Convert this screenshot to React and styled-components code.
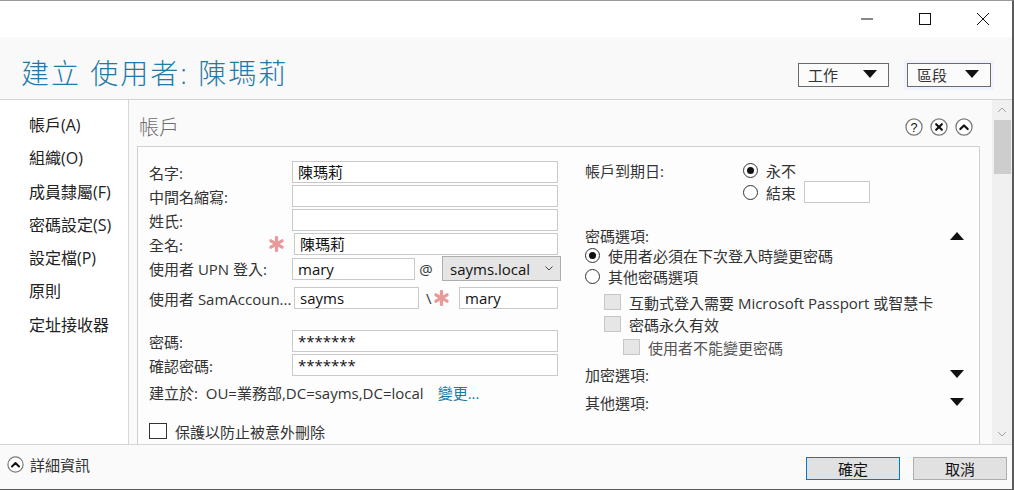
import styled, { createGlobalStyle } from 'styled-components';

const GlobalStyle = createGlobalStyle`
  html, body {
    margin: 0;
    padding: 0;
    background: #ffffff;
  }
  * {
    box-sizing: border-box;
  }
`;

const FONT = `"Open Sans", "Noto Sans CJK TC", sans-serif`;

const Window = styled.div`
  width: 1014px;
  height: 490px;
  display: flex;
  flex-direction: column;
  background: #fff;
  border-top: 1px solid #9a9a9a;
  border-right: 2px solid #5a5a5a;
  border-bottom: 1px solid #5a5a5a;
  font-family: ${FONT};
  color: #222;
  overflow: hidden;
`;

const TitleBar = styled.div`
  height: 36px;
  display: flex;
  justify-content: flex-end;
  background: #fff;
`;

const WinButton = styled.div`
  width: 58px;
  height: 36px;
  display: flex;
  align-items: center;
  justify-content: center;
`;

const Header = styled.div`
  height: 63px;
  display: flex;
  align-items: center;
  justify-content: space-between;
  background: #f9f9f9;
  border-bottom: 1px solid #d2d2d2;
  padding: 0 18px 0 21px;
`;

const Title = styled.h1`
  margin: 8px 0 0;
  font-size: 28px;
  font-weight: 300;
  color: #1f7aa8;
  letter-spacing: 2px;
  white-space: nowrap;
`;

const HeaderTools = styled.div`
  display: flex;
  align-items: center;
  gap: 12px;
  margin-top: 13px;
`;

const ToolWrap = styled.div`
  padding: 3px 3px;
  background: ${(p) => (p.$active ? '#eef3fd' : 'transparent')};
`;

const ToolSelect = styled.div`
  width: ${(p) => p.$w}px;
  height: 24px;
  border: 1px solid #6a6a6a;
  background: #fbfbfb;
  display: flex;
  align-items: center;
  justify-content: space-between;
  padding: 0 11px 0 9px;
  font-size: 15px;
  color: #333;
`;

const Main = styled.div`
  height: 345px;
  display: flex;
  border-bottom: 1px solid #d6d6d6;
`;

const Nav = styled.ul`
  width: 129px;
  margin: 0;
  padding: 9px 0 0 29px;
  list-style: none;
  border-right: 1px solid #d6d6d6;
  background: #fff;
`;

const NavItem = styled.li`
  height: 33.3px;
  line-height: 33px;
  font-size: 16px;
  color: #222;
  white-space: nowrap;
`;

const Content = styled.div`
  flex: 1;
  display: flex;
  flex-direction: column;
  background: #fafafa;
  padding-left: 8px;
  overflow: hidden;
`;

const SectionHead = styled.div`
  height: 46px;
  display: flex;
  align-items: center;
  justify-content: space-between;
  padding: 0 19px 0 2px;
`;

const SectionTitle = styled.div`
  font-size: 20px;
  color: #6e6e6e;
  font-weight: 300;
  margin-top: 6px;
`;

const HeadIcons = styled.div`
  display: flex;
  gap: 7px;
  margin-top: 8px;
`;

const Panel = styled.div`
  flex: 1;
  margin-right: 12px;
  border: 1px solid #d0d0d0;
  border-bottom: none;
  background: #fdfdfd;
  display: flex;
  padding: 14px 0 0 11px;
  gap: 24px;
`;

const LeftCol = styled.div`
  width: 412px;
  display: flex;
  flex-direction: column;
`;

const Row = styled.div`
  display: flex;
  align-items: center;
  height: ${(p) => p.$h || 22}px;
  margin-top: ${(p) => p.$mt || 0}px;
  font-size: 15px;
`;

const Label = styled.div`
  width: 143px;
  flex-shrink: 0;
  display: flex;
  align-items: center;
  justify-content: space-between;
  color: #333;
  white-space: nowrap;
  overflow: hidden;
`;

const Input = styled.div`
  width: ${(p) => p.$w}px;
  flex-shrink: 0;
  height: 22px;
  margin-left: ${(p) => p.$ml || 0}px;
  border: 1px solid #c9c9c9;
  background: #fff;
  font-size: 15px;
  line-height: 20px;
  padding-left: 5px;
  color: #111;
  white-space: nowrap;
`;

const Combo = styled.div`
  width: 119px;
  flex-shrink: 0;
  height: 25px;
  margin-left: 5px;
  border: 1px solid #adadad;
  background: #e5e5e5;
  display: flex;
  align-items: center;
  justify-content: space-between;
  padding: 0 7px 0 7px;
  font-size: 15px;
  color: #111;
`;

const Sep = styled.span`
  width: ${(p) => p.$w}px;
  flex-shrink: 0;
  text-align: ${(p) => p.$align || 'center'};
  padding-left: ${(p) => p.$pl || 0}px;
  font-size: 15px;
  color: #333;
`;

const Star = styled.span`
  display: flex;
  flex-shrink: 0;
  margin-right: ${(p) => p.$mr || 0}px;
`;

const CreatedIn = styled.span`
  color: #333;
  white-space: nowrap;
`;

const Link = styled.span`
  color: #1a7aa6;
  margin-left: 14px;
`;

const CheckBox = styled.span`
  width: ${(p) => (p.$disabled ? 17 : 18)}px;
  height: 16px;
  flex-shrink: 0;
  border: 1px solid ${(p) => (p.$disabled ? '#c6c6c6' : '#333')};
  background: ${(p) => (p.$disabled ? '#e6e6e6' : '#fff')};
  margin-right: 8px;
`;

const CheckLabel = styled.span`
  color: #333;
`;

const RightCol = styled.div`
  width: 380px;
  display: flex;
  flex-direction: column;
  font-size: 15px;
  color: #333;
`;

const ExpiryBlock = styled.div`
  display: flex;
  margin-top: -2px;
`;

const ExpiryLabel = styled.div`
  width: 158px;
  height: 22px;
  display: flex;
  align-items: center;
`;

const RadioGroup = styled.div`
  display: flex;
  flex-direction: column;
`;

const OptRow = styled.div`
  display: flex;
  align-items: center;
  height: ${(p) => p.$h || 21}px;
  margin-top: ${(p) => p.$mt || 0}px;
  padding-left: ${(p) => p.$indent || 0}px;
  color: ${(p) => (p.$muted ? '#555' : '#333')};
  white-space: nowrap;
`;

const Radio = styled.span`
  width: 15px;
  height: 15px;
  border-radius: 50%;
  border: 1px solid #333;
  background: #fff;
  display: inline-flex;
  align-items: center;
  justify-content: center;
  margin-right: 8px;
  flex-shrink: 0;
  &::after {
    content: '';
    width: 7px;
    height: 7px;
    border-radius: 50%;
    background: ${(p) => (p.$checked ? '#111' : 'transparent')};
  }
`;

const SmallInput = styled.div`
  width: 66px;
  height: 22px;
  border: 1px solid #c9c9c9;
  background: #fff;
  margin-left: 8px;
`;

const GroupHead = styled.div`
  display: flex;
  align-items: center;
  justify-content: space-between;
  height: ${(p) => p.$h || 28}px;
  margin-top: ${(p) => p.$mt || 0}px;
  padding-right: 1px;
`;

const Scrollbar = styled.div`
  width: 20px;
  background: #f0f0f0;
  display: flex;
  flex-direction: column;
  align-items: center;
`;

const ScrollArrow = styled.div`
  height: 20px;
  display: flex;
  align-items: center;
  justify-content: center;
`;

const Thumb = styled.div`
  width: 17px;
  height: 54px;
  background: #cdcdcd;
`;

const Spacer = styled.div`
  flex: 1;
`;

const Footer = styled.div`
  flex: 1;
  display: flex;
  align-items: flex-start;
  justify-content: space-between;
  background: #fafafa;
  padding: 9px 5px 0 7px;
`;

const Details = styled.div`
  display: flex;
  align-items: center;
  gap: 6px;
  font-size: 15px;
  color: #333;
`;

const Buttons = styled.div`
  display: flex;
  gap: 13px;
  margin-top: 3px;
`;

const Button = styled.div`
  width: 94px;
  height: 23px;
  border: 1px solid ${(p) => (p.$primary ? '#0078d7' : '#adadad')};
  background: #e1e1e1;
  display: flex;
  align-items: center;
  justify-content: center;
  font-size: 15px;
  color: #111;
`;

function Triangle({ up }) {
  return (
    <svg width="14" height="9" viewBox="0 0 14 9">
      {up ? <polygon points="0,9 14,9 7,1" fill="#111" /> : <polygon points="0,0 14,0 7,8" fill="#111" />}
    </svg>
  );
}

function Asterisk() {
  return (
    <svg width="17" height="16" viewBox="0 0 17 16">
      <g stroke="#e89a9a" strokeWidth="3.2" strokeLinecap="round">
        <line x1="8.5" y1="1.5" x2="8.5" y2="14.5" />
        <line x1="2.9" y1="4.8" x2="14.1" y2="11.2" />
        <line x1="2.9" y1="11.2" x2="14.1" y2="4.8" />
      </g>
    </svg>
  );
}

function CircleIcon({ kind, size = 17 }) {
  return (
    <svg width={size} height={size} viewBox="0 0 17 17">
      <circle cx="8.5" cy="8.5" r="7.6" fill="#fff" stroke="#7a7a7a" strokeWidth="1.2" />
      {kind === 'help' && (
        <text x="8.5" y="13" textAnchor="middle" fontSize="12" fontFamily="Liberation Sans, sans-serif" fill="#111">?</text>
      )}
      {kind === 'close' && (
        <g stroke="#111" strokeWidth="2" strokeLinecap="round">
          <line x1="5.8" y1="5.8" x2="11.2" y2="11.2" />
          <line x1="11.2" y1="5.8" x2="5.8" y2="11.2" />
        </g>
      )}
      {kind === 'up' && (
        <polyline points="5,10.5 8.5,7 12,10.5" fill="none" stroke="#111" strokeWidth="2" strokeLinecap="round" strokeLinejoin="round" />
      )}
    </svg>
  );
}

function Chevron({ down }) {
  return (
    <svg width="10" height="6" viewBox="0 0 10 6">
      <polyline points={down ? '1,1 5,5 9,1' : '1,5 5,1 9,5'} fill="none" stroke="#a3a3a3" strokeWidth="1" />
    </svg>
  );
}

export default function App() {
  return (
    <>
      <GlobalStyle />
      <Window>
        <TitleBar>
          <WinButton>
            <svg width="12" height="2" viewBox="0 0 12 2"><line x1="0" y1="1" x2="12" y2="1" stroke="#111" strokeWidth="1" /></svg>
          </WinButton>
          <WinButton>
            <svg width="12" height="12" viewBox="0 0 12 12"><rect x="0.5" y="0.5" width="11" height="11" fill="none" stroke="#111" strokeWidth="1" /></svg>
          </WinButton>
          <WinButton>
            <svg width="12" height="12" viewBox="0 0 12 12">
              <line x1="0" y1="0" x2="12" y2="12" stroke="#111" strokeWidth="1" />
              <line x1="12" y1="0" x2="0" y2="12" stroke="#111" strokeWidth="1" />
            </svg>
          </WinButton>
        </TitleBar>

        <Header>
          <Title>建立 使用者: 陳瑪莉</Title>
          <HeaderTools>
            <ToolWrap>
              <ToolSelect $w={91}>
                <span>工作</span>
                <Triangle />
              </ToolSelect>
            </ToolWrap>
            <ToolWrap $active>
              <ToolSelect $w={84}>
                <span>區段</span>
                <Triangle />
              </ToolSelect>
            </ToolWrap>
          </HeaderTools>
        </Header>

        <Main>
          <Nav>
            <NavItem>帳戶(A)</NavItem>
            <NavItem>組織(O)</NavItem>
            <NavItem>成員隸屬(F)</NavItem>
            <NavItem>密碼設定(S)</NavItem>
            <NavItem>設定檔(P)</NavItem>
            <NavItem>原則</NavItem>
            <NavItem>定址接收器</NavItem>
          </Nav>

          <Content>
            <SectionHead>
              <SectionTitle>帳戶</SectionTitle>
              <HeadIcons>
                <CircleIcon kind="help" size={18} />
                <CircleIcon kind="close" size={18} />
                <CircleIcon kind="up" size={18} />
              </HeadIcons>
            </SectionHead>

            <Panel>
              <LeftCol>
                <Row>
                  <Label>名字:</Label>
                  <Input $w={266}>陳瑪莉</Input>
                </Row>
                <Row $mt={2}>
                  <Label>中間名縮寫:</Label>
                  <Input $w={266} />
                </Row>
                <Row $mt={2}>
                  <Label>姓氏:</Label>
                  <Input $w={266} />
                </Row>
                <Row $mt={2}>
                  <Label>
                    <span>全名:</span>
                    <Star $mr={7}><Asterisk /></Star>
                  </Label>
                  <Input $w={264} $ml={2}>陳瑪莉</Input>
                </Row>
                <Row $mt={1} $h={25}>
                  <Label>使用者 UPN 登入:</Label>
                  <Input $w={123}>mary</Input>
                  <Sep $w={22}>@</Sep>
                  <Combo>
                    <span>sayms.local</span>
                    <svg width="8" height="5" viewBox="0 0 8 5"><polyline points="0.5,0.5 4,4 7.5,0.5" fill="none" stroke="#444" strokeWidth="1" /></svg>
                  </Combo>
                </Row>
                <Row $mt={6}>
                  <Label>使用者 SamAccoun...</Label>
                  <Input $w={125} $ml={2}>sayms</Input>
                  <Sep $w={14} $align="left" $pl={7}>\</Sep>
                  <Star $mr={9}><Asterisk /></Star>
                  <Input $w={99}>mary</Input>
                </Row>
                <Row $mt={21}>
                  <Label>密碼:</Label>
                  <Input $w={266}>*******</Input>
                </Row>
                <Row $mt={2}>
                  <Label>確認密碼:</Label>
                  <Input $w={266}>*******</Input>
                </Row>
                <Row $mt={5}>
                  <CreatedIn>建立於:&nbsp;&nbsp;OU=業務部,DC=sayms,DC=local</CreatedIn>
                  <Link>變更...</Link>
                </Row>
                <Row $mt={19} $h={18}>
                  <CheckBox />
                  <CheckLabel>保護以防止被意外刪除</CheckLabel>
                </Row>
              </LeftCol>

              <RightCol>
                <ExpiryBlock>
                  <ExpiryLabel>帳戶到期日:</ExpiryLabel>
                  <RadioGroup>
                    <OptRow $h={22}>
                      <Radio $checked />
                      永不
                    </OptRow>
                    <OptRow $h={22}>
                      <Radio />
                      結束
                      <SmallInput />
                    </OptRow>
                  </RadioGroup>
                </ExpiryBlock>

                <GroupHead $h={20} $mt={22}>
                  <span>密碼選項:</span>
                  <Triangle up />
                </GroupHead>
                <OptRow>
                  <Radio $checked />
                  使用者必須在下次登入時變更密碼
                </OptRow>
                <OptRow>
                  <Radio />
                  其他密碼選項
                </OptRow>
                <OptRow $h={22} $mt={4} $indent={19}>
                  <CheckBox $disabled />
                  互動式登入需要 Microsoft Passport 或智慧卡
                </OptRow>
                <OptRow $h={22} $indent={19}>
                  <CheckBox $disabled />
                  密碼永久有效
                </OptRow>
                <OptRow $h={22} $mt={1} $indent={38} $muted>
                  <CheckBox $disabled />
                  使用者不能變更密碼
                </OptRow>
                <GroupHead $mt={2}>
                  <span>加密選項:</span>
                  <Triangle />
                </GroupHead>
                <GroupHead>
                  <span>其他選項:</span>
                  <Triangle />
                </GroupHead>
              </RightCol>
            </Panel>
          </Content>

          <Scrollbar>
            <ScrollArrow><Chevron /></ScrollArrow>
            <Thumb />
            <Spacer />
            <ScrollArrow><Chevron down /></ScrollArrow>
          </Scrollbar>
        </Main>

        <Footer>
          <Details>
            <CircleIcon kind="up" />
            詳細資訊
          </Details>
          <Buttons>
            <Button $primary>確定</Button>
            <Button>取消</Button>
          </Buttons>
        </Footer>
      </Window>
    </>
  );
}
